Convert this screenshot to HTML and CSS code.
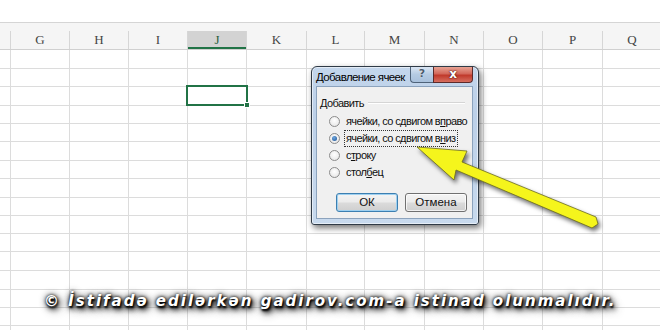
FILE: index.html
```html
<!DOCTYPE html>
<html lang="ru">
<head>
<meta charset="utf-8">
<title>Excel — Добавление ячеек</title>
<link rel="stylesheet" href="styles.css">
</head>
<body>
<div class="page">
  <div class="topband"></div>
  <div class="colhead">
    <div class="hc"></div>
    <div class="hc">G</div>
    <div class="hc">H</div>
    <div class="hc">I</div>
    <div class="hc hc-sel">J</div>
    <div class="hc">K</div>
    <div class="hc">L</div>
    <div class="hc">M</div>
    <div class="hc">N</div>
    <div class="hc">O</div>
    <div class="hc">P</div>
    <div class="hc">Q</div>
  </div>
  <div class="sheet">
    <div class="cols">
      <div class="col"></div><div class="col"></div><div class="col"></div><div class="col"></div>
      <div class="col"></div><div class="col"></div><div class="col"></div><div class="col"></div>
      <div class="col"></div><div class="col"></div><div class="col"></div><div class="col"></div>
    </div>
    <div class="rows">
      <div class="row r19"></div><div class="row r18"></div><div class="row r19"></div>
      <div class="row r18"></div><div class="row r18"></div><div class="row r19"></div>
      <div class="row r18"></div><div class="row r19"></div><div class="row r18"></div>
      <div class="row r18"></div><div class="row r18"></div><div class="row r19"></div>
      <div class="row r19"></div><div class="row r18"></div><div class="row r18"></div>
    </div>
  </div>

  <div class="selection"><span class="handle"></span></div>

  <div class="dialog">
    <div class="titlebar">
      <span class="title">Добавление ячеек</span>
      <div class="caption-btns">
        <span class="cbtn help">?</span>
        <span class="cbtn close">x</span>
      </div>
    </div>
    <div class="client">
      <div class="group-head"><span>Добавить</span><span class="group-line"></span></div>
      <div class="options">
        <div class="opt"><span class="radio"></span><span class="lbl">ячейки, со сдвигом в<u>п</u>раво</span></div>
        <div class="opt"><span class="radio on"></span><span class="lbl focus">ячейки, со сдвигом в<u>н</u>из</span></div>
        <div class="opt"><span class="radio"></span><span class="lbl">с<u>т</u>року</span></div>
        <div class="opt"><span class="radio"></span><span class="lbl">стол<u>б</u>ец</span></div>
      </div>
      <div class="buttons">
        <span class="btn default">ОК</span>
        <span class="btn">Отмена</span>
      </div>
    </div>
  </div>

  <svg class="arrow" viewBox="405 138 200 100" width="200" height="100">
    <polygon points="417,147 467,151 462,162 596,217 598,224 592,228 456,170 454,180" />
  </svg>

  <div class="watermark">© İstifadə edilərkən gadirov.com-a istinad olunmalıdır.</div>
</div>
</body>
</html>
```
FILE: styles.css
```css
* { box-sizing: border-box; }
html, body { margin: 0; padding: 0; }
body { background: #fff; }

.page {
  position: relative;
  width: 660px;
  height: 330px;
  overflow: hidden;
  background: #fff;
}

.topband { height: 22px; background: #fff; }

.colhead {
  display: grid;
  grid-template-columns: 11px 59px 59px 59px 59px 60px 58px 60px 59px 59px 60px 59px;
  height: 28px;
  border-top: 1px solid #d5d5d5;
  border-bottom: 1px solid #d0d0d0;
  background: #f5f5f5;
  padding-top: 8px;
}
.hc {
  border-right: 1px solid #d6d6d6;
  font-family: "Liberation Serif", "Times New Roman", serif;
  font-size: 13px;
  color: #444;
  text-align: center;
  line-height: 18px;
  height: 18px;
}
.hc-sel {
  background: #d3d3d3;
  color: #2a5e3f;
  box-shadow: inset 0 -2px 0 #217346;
}

.sheet {
  display: grid;
  height: 280px;
}
.cols, .rows { grid-area: 1 / 1; }
.cols {
  display: grid;
  grid-template-columns: 11px 59px 59px 59px 59px 60px 58px 60px 59px 59px 60px 59px;
}
.col { border-right: 1px solid #dcdcdc; }
.rows { display: flex; flex-direction: column; }
.row { border-bottom: 1px solid #dcdcdc; flex: none; }
.r18 { height: 18px; }
.r19 { height: 19px; }

.selection {
  position: absolute;
  left: 186px;
  top: 85px;
  width: 62px;
  height: 21px;
  border: 2px solid #217346;
}
.handle {
  position: absolute;
  right: -4px;
  bottom: -4px;
  width: 6px;
  height: 6px;
  background: #217346;
  border: 1px solid #fff;
}

/* Dialog */
.dialog {
  position: absolute;
  left: 311px;
  top: 66px;
  width: 168px;
  height: 159px;
  border: 1px solid #2f3a46;
  border-radius: 6px 6px 3px 3px;
  background: linear-gradient(#c3d6ec, #bcd0e8 30%, #c8daee);
  box-shadow: 2px 3px 6px rgba(0,0,0,.55), inset 0 0 0 1px rgba(255,255,255,.55);
  display: flex;
  flex-direction: column;
  padding: 0 5px 5px 4px;
  font-family: "Liberation Sans", Arial, sans-serif;
  color: #111;
  white-space: nowrap;
}
.titlebar {
  height: 19px;
  display: flex;
  justify-content: space-between;
  align-items: flex-start;
}
.title {
  font-size: 11.5px;
  letter-spacing: -0.6px;
  line-height: 19px;
  padding-top: 1px;
  color: #000;
}
.caption-btns { display: flex; }
.cbtn {
  height: 16px;
  border: 1px solid #4f6379;
  border-top: none;
  font-weight: bold;
  text-align: center;
  line-height: 14px;
  font-family: "DejaVu Sans", sans-serif;
}
.help {
  width: 23px;
  border-radius: 0 0 0 4px;
  background: linear-gradient(#dbe6f3, #b5cbe3 50%, #a9c1dc);
  font-size: 11px;
  color: #4a5a6c;
  text-shadow: 0 0 1px #fff;
  border-right: none;
}
.close {
  width: 40px;
  border-color: #5b2a2a;
  border-radius: 0 0 4px 0;
  background: linear-gradient(#e8a393, #d2675a 45%, #c0392b 55%, #d66e5f);
  color: #fff;
  font-size: 12px;
  text-shadow: 0 0 1px #4a1010, 0 0 2px #4a1010;
}

.client {
  flex: 1;
  background: #f0f0f0;
  border: 1px solid #8ca3bd;
  padding: 9px 0 0 3px;
  font-size: 11px;
  letter-spacing: -0.6px;
}
.group-head {
  display: flex;
  align-items: center;
  gap: 4px;
  height: 14px;
  padding-right: 7px;
}
.group-line {
  flex: 1;
  height: 2px;
  border-top: 1px solid #d5d5d5;
  border-bottom: 1px solid #fff;
}
.options {
  display: flex;
  flex-direction: column;
  gap: 4px;
  padding: 5px 0 0 9px;
}
.opt {
  display: flex;
  align-items: center;
  height: 13px;
  gap: 4px;
}
.radio {
  flex: none;
  width: 11px;
  height: 11px;
  border-radius: 50%;
  border: 1px solid #8c8c8c;
  background: radial-gradient(circle at 50% 40%, #fff, #e2e2e2);
  display: flex;
  align-items: center;
  justify-content: center;
}
.radio.on::after {
  content: "";
  width: 5px;
  height: 5px;
  border-radius: 50%;
  background: radial-gradient(circle at 40% 35%, #6fa8e0, #1b4f91);
}
.lbl {
  line-height: 13px;
  padding: 1px 1px;
  border: 1px dotted transparent;
}
.lbl u { text-decoration-thickness: 1px; text-underline-offset: 1px; }
.lbl.focus { border-color: #333; }

.buttons {
  display: flex;
  gap: 7px;
  padding: 14px 0 0 16px;
}
.btn {
  width: 62px;
  height: 19px;
  border: 1px solid #707070;
  border-radius: 3px;
  background: linear-gradient(#f4f4f4, #ebebeb 48%, #dbdbdb 52%, #cfcfcf);
  text-align: center;
  line-height: 17px;
  font-size: 11.5px;
  letter-spacing: 0;
  box-shadow: inset 0 0 0 1px rgba(255,255,255,.7);
}
.btn.default {
  border-color: #3c7fb1;
  box-shadow: inset 0 0 0 1px #9ed0f0;
}

/* Arrow */
.arrow {
  position: absolute;
  left: 405px;
  top: 138px;
  overflow: visible;
  filter: drop-shadow(2px 3px 2px rgba(0,0,0,.55));
}
.arrow polygon {
  fill: #f5f51c;
  stroke: #6b6b20;
  stroke-width: 0.8;
  stroke-linejoin: round;
}

/* Watermark */
.watermark {
  position: absolute;
  left: 44px;
  top: 292px;
  font-family: "DejaVu Sans", Verdana, sans-serif;
  font-weight: bold;
  font-style: italic;
  font-size: 15px;
  letter-spacing: 2px;
  color: #fff;
  white-space: nowrap;
  text-shadow: 1px 2px 2px #000, 2px 3px 5px #111, 0 0 7px #222, 3px 4px 9px #333, 0 0 3px #000;
}
```
